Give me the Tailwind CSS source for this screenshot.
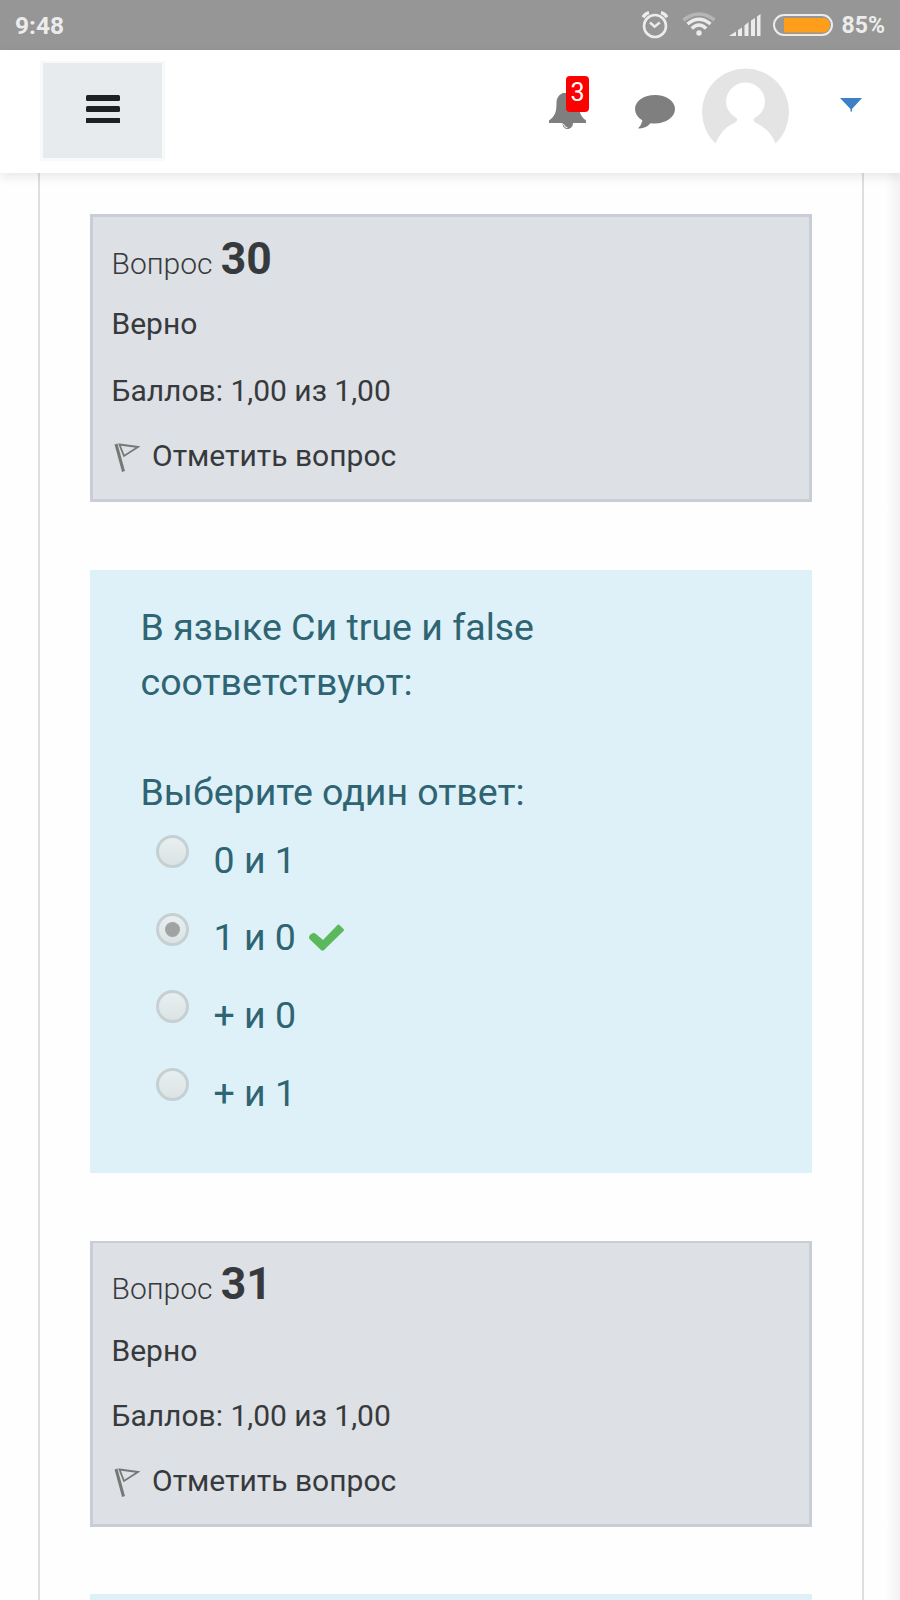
<!DOCTYPE html>
<html lang="ru">
<head>
<meta charset="utf-8">
<title>Тест</title>
<script src="https://cdn.jsdelivr.net/npm/@tailwindcss/browser@4"></script>
</head>
<body class="w-[900px] h-[1600px] overflow-hidden bg-[#fefefe] font-['Roboto','Noto_Sans',sans-serif] flex flex-col">
  <!-- Status bar -->
  <div class="h-[50px] shrink-0 bg-[#969696] text-[#ececec] flex items-center justify-between pl-[15px] pr-[15px] font-bold">
    <span class="text-[24.5px] leading-[50px] pt-px">9:48</span>
    <div class="flex items-center h-[50px]">
      <svg class="w-[28px] h-[28px] mr-[13px]" viewBox="0 0 28 28" fill="none" stroke="#ececec">
        <circle cx="14" cy="15" r="11" stroke-width="2.6"/>
        <path d="M9 11.5l4.6 4.2 5.2-4.2" stroke-width="2.4"/>
        <path d="M2 6.2Q4.5 2.5 8 1.7M26 6.2Q23.500 2.500 20 1.700" stroke-width="3.4"/>
      </svg>
      <svg class="w-[34px] h-[26px] mr-[13px]" viewBox="0 0 34 26" fill="none">
        <path d="M1.500 8Q17 -4 32.500 8" stroke="#b5b5b5" stroke-width="3.500"/>
        <path d="M5.500 12Q17 2.500 28.500 12M9.800 16.500Q17 9.500 24.200 16.500" stroke="#ececec" stroke-width="3.400"/>
        <circle cx="17" cy="21" r="2.700" fill="#ececec"/>
      </svg>
      <svg class="w-[32px] h-[22px] mr-[12px]" viewBox="0 0 32 22" fill="#ececec">
        <path d="M0 22L7 17.500V22zM9 16l4-2.500V22H9zM15.500 11.500l4-3.500v14h-4zM22 6.500l4-2.500v18h-4zM28 2.500l3.500-2.500v22H28z"/>
      </svg>
      <svg class="w-[60px] h-[22px] mr-[9px]" viewBox="0 0 60 22">
        <rect x="1" y="1" width="58" height="20" rx="10" fill="none" stroke="#ececec" stroke-width="2"/>
        <path d="M11 4H52Q57 6 57 11T52 18.500H11z" fill="#ff9e1b"/>
      </svg>
      <span class="text-[23px] leading-[50px] pt-[2px]">85%</span>
    </div>
  </div>

  <!-- Navigation bar -->
  <header class="relative z-10 h-[123px] shrink-0 bg-white shadow-[0_4px_10px_rgba(0,0,0,0.09)] flex items-start">
    <div class="mt-[11px] ml-[40px] w-[125px] h-[100px] bg-[#e8ebee] border-[3px] border-t-2 border-[#f8f9fa] flex justify-center">
      <svg class="w-[34px] h-[28px] mt-[32px]" viewBox="0 0 34 28" fill="#1d2124">
        <rect width="34" height="6" rx="1.500"/><rect y="11" width="34" height="6" rx="1.500"/><rect y="23" width="34" height="5" rx=".5"/>
      </svg>
    </div>
    <div class="relative ml-[384px] mt-[43px] w-[37px] h-[36px]">
      <svg class="w-[37px] h-[36px]" viewBox="0 0 37 36" fill="#7f7f7f">
        <path d="M14 0C10 1.500 7.500 5 7.500 10C7.500 20 5.500 23.500 0 27.500V30H13.500C13.500 33.500 15.500 36 18.500 36S24 33.500 24 30H37V27.500C33.500 25 31.500 22 30.500 18V0z"/>
        <path d="M14.500 31Q15 34.500 18.500 34.800" stroke="#fff" fill="none" stroke-width="1"/>
      </svg>
      <span class="absolute left-[17px] -top-[17px] w-[23px] h-[36px] rounded-[4px] bg-[#ff0000] text-white text-[25px] leading-[33px] text-center">3</span>
    </div>
    <svg class="w-[40px] h-[35px] ml-[49px] mt-[44px]" viewBox="0 0 40 35" fill="#7f7f7f">
      <path d="M20 1C31 1 40 7 40 15S31 29.500 20 29.500Q18 29.500 15.500 29.200Q11 34.500 3 34.500Q6.500 31 7.500 26.500Q0 22 0 15C0 7 9 1 20 1z"/>
    </svg>
    <svg class="w-[87px] h-[87px] ml-[27px] mt-[18px]" viewBox="0 0 87 87">
      <path d="M13.500 75.500A43.500 43.500 0 1 1 73.500 75.500Q68 61 54 55Q49 52 54 49Q63 43 63 34A19.500 19.500 0 0 0 24 34Q24 43 33 49Q38 52 32 55Q19 61 13.500 75.500z" fill="#e4e4e4"/>
    </svg>
    <svg class="w-[22px] h-[14px] ml-[51px] mt-[48px]" viewBox="0 0 22 14" fill="#3b80c8"><path d="M0 0H22L12 11V13.500H10.500V11z"/></svg>
  </header>

  <!-- Page region -->
  <div class="h-[1427px] shrink-0 flex">
    <main class="ml-[38px] w-[826px] border-x-2 border-[#dedede] px-[50px]">
      <section class="mt-[41px] w-[722px] h-[288px] border-[3px] border-[#c9cdd6] bg-[#dde0e5] text-[#373a3c] pl-[18.5px] pt-[22px] text-[30px] leading-[40px]">
        <div class="h-[40px] font-light">Вопрос <span class="ml-px font-bold text-[44.5px]">30</span></div>
        <div class="mt-[25px]">Верно</div>
        <div class="mt-[27px]">Баллов: 1,00 из 1,00</div>
        <div class="mt-[25px] flex"><svg class="w-[26px] h-[30px] ml-[2.5px] mr-[12px] mt-[7px]" viewBox="0 0 26 30" fill="none" stroke="#777"><path d="M2 1L9.500 28.500" stroke-width="3"/><path d="M5.500 1.500L24 4L10 13z" stroke-width="1.800"/></svg>Отметить вопрос</div>
      </section>

      <section class="mt-[68px] w-[722px] h-[603px] bg-[#def1f8] text-[#2f6473] pl-[50.5px] pt-[30px] text-[37.5px] leading-[55px]">
        <div>В языке Си true и false<br>соответствуют:</div>
        <div class="mt-[55px]">Выберите один ответ:</div>
        <div class="mt-[12.6px] flex flex-col gap-[22.7px] pl-[15px]">
          <div class="flex h-[55px]"><span class="w-[33px] h-[33px] mt-[2.4px] mr-[25px] rounded-full border-[3px] border-[#c6d0d3] bg-gradient-to-b from-[#e8eff1] to-[#dbe3e5]"></span>0 и 1</div>
          <div class="flex h-[55px]"><span class="w-[33px] h-[33px] mt-[2.4px] mr-[25px] rounded-full border-[3px] border-[#c6d0d3] bg-gradient-to-b from-[#e8eff1] to-[#dbe3e5] flex items-center justify-center"><span class="w-[15px] h-[15px] rounded-full bg-[#9fa3a4]"></span></span>1 и 0
            <svg class="w-[35px] h-[27px] ml-[13px] mt-[13.4px]" viewBox="0 0 35 27" fill="#5cb85c"><path d="M1 11L3 9.500Q5 8.500 7 10L14 16L28.500 1Q29.500 0 30.500 1L34.500 5Q35.500 6 34.500 7L15 26Q13.500 27.500 12 26L1 15.500Q-1 13 1 11z"/></svg></div>
          <div class="flex h-[55px]"><span class="w-[33px] h-[33px] mt-[2.4px] mr-[25px] rounded-full border-[3px] border-[#c6d0d3] bg-gradient-to-b from-[#e8eff1] to-[#dbe3e5]"></span>+ и 0</div>
          <div class="flex h-[55px]"><span class="w-[33px] h-[33px] mt-[2.4px] mr-[25px] rounded-full border-[3px] border-[#c6d0d3] bg-gradient-to-b from-[#e8eff1] to-[#dbe3e5]"></span>+ и 1</div>
        </div>
      </section>

      <section class="mt-[68px] w-[722px] h-[286px] border-[3px] border-t-2 border-[#c9cdd6] bg-[#dde0e5] text-[#373a3c] pl-[18.5px] pt-[21px] text-[30px] leading-[40px]">
        <div class="h-[40px] font-light">Вопрос <span class="ml-px font-bold text-[44.5px]">31</span></div>
        <div class="mt-[27px]">Верно</div>
        <div class="mt-[25px]">Баллов: 1,00 из 1,00</div>
        <div class="mt-[25px] flex"><svg class="w-[26px] h-[30px] ml-[2.5px] mr-[12px] mt-[7px]" viewBox="0 0 26 30" fill="none" stroke="#777"><path d="M2 1L9.500 28.500" stroke-width="3"/><path d="M5.500 1.500L24 4L10 13z" stroke-width="1.800"/></svg>Отметить вопрос</div>
      </section>

      <section class="mt-[67px] w-[722px] h-[6px] bg-[#def1f8]"></section>
    </main>
    <div class="ml-auto w-[14px] bg-gradient-to-r from-[#fefefe] to-[#f1f1f1]"></div>
  </div>
</body>
</html>
